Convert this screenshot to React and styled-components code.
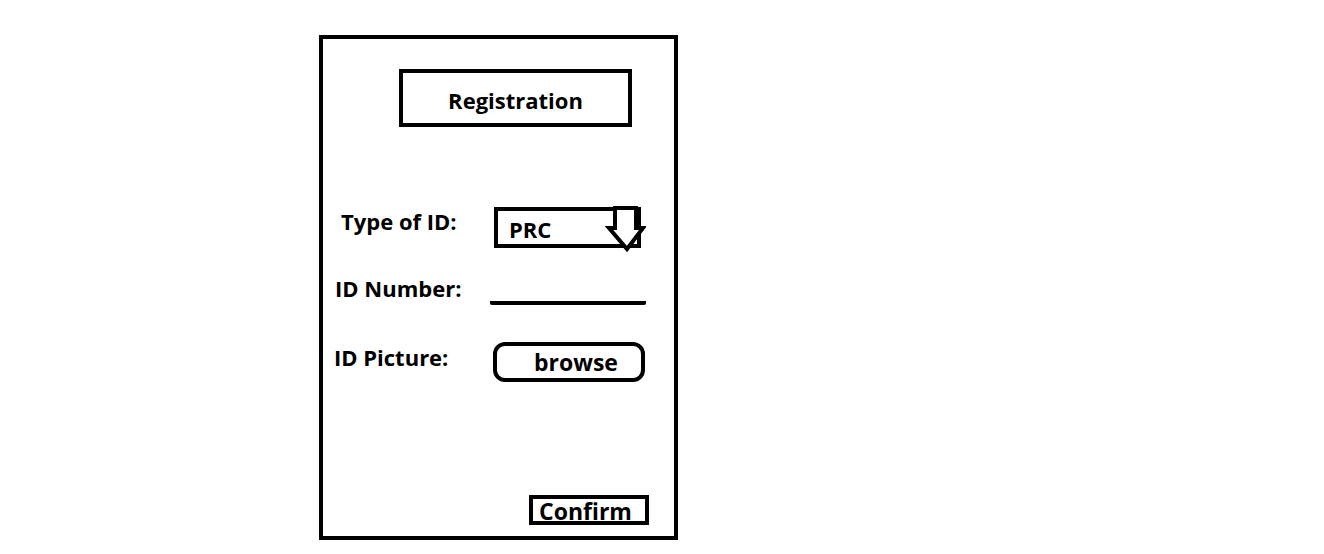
import React from 'react';
import styled, { createGlobalStyle } from 'styled-components';

const GlobalStyle = createGlobalStyle`
  html, body {
    margin: 0;
    padding: 0;
    background: #fff;
  }
  body {
    font-family: 'Open Sans', 'Liberation Sans', sans-serif;
    font-variant-ligatures: none;
    color: #000;
  }
`;

const Page = styled.div`
  width: 1324px;
  height: 554px;
  padding: 35px 0 0 319px;
  box-sizing: border-box;
`;

const Frame = styled.div`
  width: 359px;
  height: 505px;
  box-sizing: border-box;
  border: 4px solid #000;
  display: flex;
  flex-direction: column;
`;

const TitleBox = styled.div`
  margin: 30px 0 0 76px;
  width: 233px;
  height: 58px;
  box-sizing: border-box;
  border: 4px solid #000;
  display: flex;
  align-items: center;
  justify-content: center;
  padding: 4px 0 0 0;
  font-size: 22px;
  font-weight: 700;
`;

const Row = styled.div`
  display: grid;
  grid-template-columns: ${({ at }) => at}px 1fr;
  align-items: start;
  margin-top: ${({ gap }) => gap}px;
`;

const Label = styled.div`
  padding-left: ${({ indent }) => indent}px;
  margin-top: ${({ drop }) => drop}px;
  font-size: 22px;
  font-weight: 700;
  line-height: 24px;
  white-space: nowrap;
`;

const Select = styled.div`
  position: relative;
  width: 147px;
  height: 41px;
  box-sizing: border-box;
  border: 4px solid #000;
  display: flex;
  align-items: center;
  padding: 3px 0 0 11px;
  font-size: 22px;
  font-weight: 700;
`;

const ArrowIcon = styled.svg`
  position: absolute;
  left: 106px;
  top: -7px;
`;

const Underline = styled.div`
  width: 156px;
  height: 28px;
  box-sizing: border-box;
  border-bottom: 4px solid #000;
  border-radius: 0 0 2px 2px;
`;

const BrowseButton = styled.button`
  width: 152px;
  height: 40px;
  box-sizing: border-box;
  border: 4px solid #000;
  border-radius: 12px;
  background: #fff;
  padding: 0 0 0 14px;
  font-family: inherit;
  font-size: 23px;
  font-weight: 700;
  color: #000;
`;

const ConfirmButton = styled.button`
  align-self: flex-end;
  margin: auto 25px 11px 0;
  width: 120px;
  height: 30px;
  box-sizing: border-box;
  border: 4px solid #000;
  background: #fff;
  padding: 0 0 0 6px;
  display: flex;
  align-items: flex-end;
  font-family: inherit;
  font-size: 23px;
  font-weight: 700;
  line-height: 20px;
  color: #000;
`;

const DownArrow = () => (
  <ArrowIcon width="42" height="50" viewBox="0 0 42 50">
    <polygon
      points="11,4 32,4 32,24 39,24 23,45 5,24 11,24"
      fill="#fff"
      stroke="#000"
      strokeWidth="4"
      strokeLinejoin="miter"
    />
  </ArrowIcon>
);

export default function App() {
  return (
    <>
      <GlobalStyle />
      <Page>
        <Frame>
          <TitleBox>Registration</TitleBox>

          <Row at={171} gap={80}>
            <Label indent={18} drop={2}>Type of ID:</Label>
            <Select>
              PRC
              <DownArrow />
            </Select>
          </Row>

          <Row at={167} gap={29}>
            <Label indent={12} drop={-1}>ID Number:</Label>
            <Underline />
          </Row>

          <Row at={170} gap={37}>
            <Label indent={11} drop={3}>ID Picture:</Label>
            <BrowseButton>browse</BrowseButton>
          </Row>

          <ConfirmButton>Confirm</ConfirmButton>
        </Frame>
      </Page>
    </>
  );
}
